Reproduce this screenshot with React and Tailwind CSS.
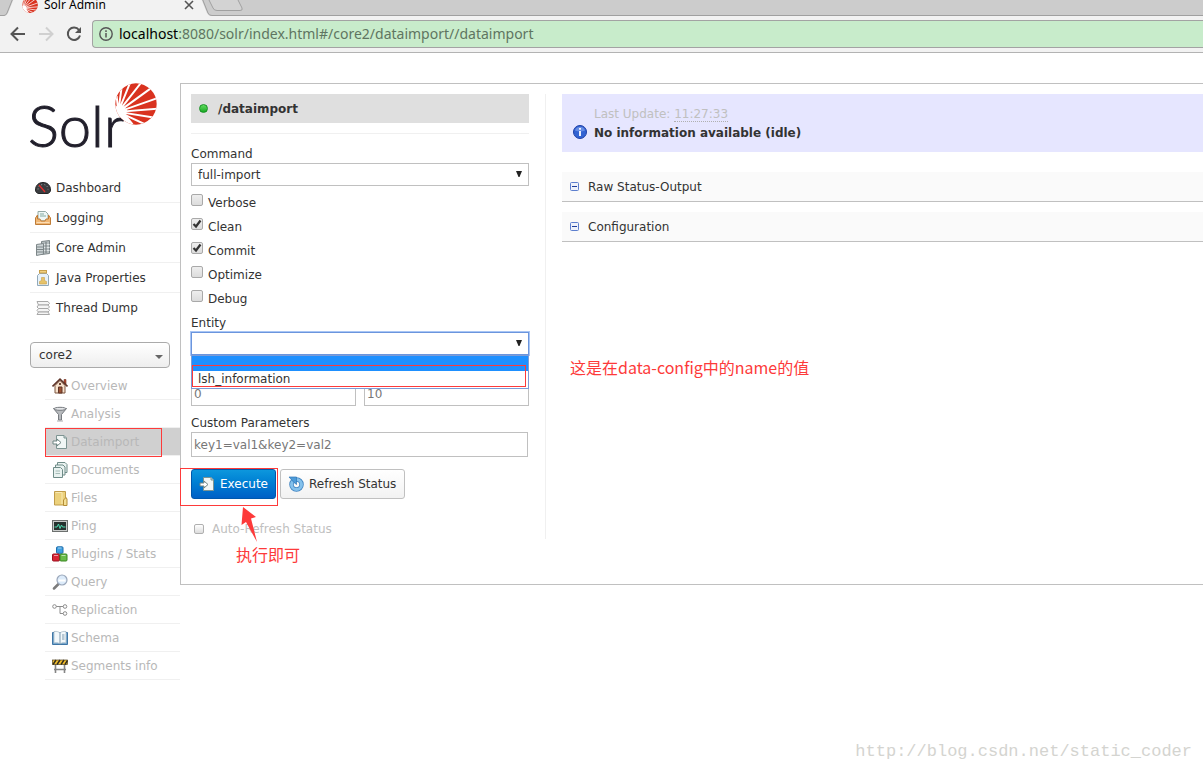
import clsx from "clsx";

function Sunburst({ className }) {
  return (
    <svg viewBox="0 0 128 128" className={className} aria-hidden="true">
      <defs>
        <clipPath id="sun">
          <circle cx="64" cy="64" r="63" />
        </clipPath>
      </defs>
      <g clipPath="url(#sun)">
        <rect width="128" height="128" fill="#d9321f" />
        <path
          d="M10 88L5 40M10 88L20 14M10 88L48 -6M10 88L82 -4M10 88L112 14M10 88L130 46M10 88L134 78M10 88L122 106M10 88L96 128"
          stroke="#fff"
          strokeWidth="6"
        />
        <path d="M-4 66L8 72L18 66L24 73L31 72L32 79L38 83L33 88L38 94L32 97L46 112L56 124L40 134L-10 130Z" fill="#fff" />
      </g>
    </svg>
  );
}

function ImportDoc() {
  return (
    <>
      <path d="M4.500 1.500H12L14.500 4V14.500H4.500Z" fill="#f1f6f5" stroke="#7d9492" />
      <path d="M12 1.500V4H14.500" fill="#c4d4d2" stroke="#7d9492" />
      <path d="M1 7H5V5L9 8.500L5 12V10H1Z" fill="#fff" stroke="#6f8583" />
    </>
  );
}

const icons = {
  dashboard: (
    <>
      <path d="M.5 10C.5 5 4 2.500 8 2.500S15.500 5 15.500 10C15.500 12 14 13.500 12 13.500H4C2 13.500 .5 12 .5 10Z" fill="#3b3d40" stroke="#242527" />
      <path d="M3 9.500C3 6.500 5 4.500 8 4.500S13 6.500 13 9.500" fill="none" stroke="#9a9da0" strokeDasharray="1 2" />
      <path d="M4 5L10 12" stroke="#e22c2c" strokeWidth="1.300" />
    </>
  ),
  logging: (
    <>
      <path d="M3 1.500H10.500L13 4V11H3Z" fill="#eef7f5" stroke="#93aaa6" />
      <path d="M5 4H9M5 6H11" stroke="#83aaa2" />
      <path d="M.5 8L2.500 5V9H5L6 11H10L11 9H13.500V5L15.500 8V14.500H.5Z" fill="#f0b775" stroke="#bf7c37" />
      <path d="M1.500 12.500H14.500" stroke="#fbdcb4" />
    </>
  ),
  core: (
    <>
      <path d="M6.500 1.500L14.500 .5V13.500L6.500 14.500Z" fill="#b4bcbe" stroke="#7d8688" />
      <path d="M6.500 4.500H14.500M6.500 7.500H14.500M6.500 10.500H14.500" stroke="#e3e8e9" />
      <path d="M1.500 4.500L8.500 3.500V14L1.500 15.500Z" fill="#cdd4d6" stroke="#7d8688" />
      <path d="M1.500 7H8.500M1.500 9.500H8.500M1.500 12H8.500" stroke="#7d8688" />
      <path d="M11 2V13" stroke="#6c7577" />
    </>
  ),
  java: (
    <>
      <path d="M2.500 5.500L4.500 3.500H11.500L13.500 5.500V15.500H2.500Z" fill="#e7f2fa" stroke="#91a9ba" />
      <rect x="4.500" y=".5" width="7" height="2.500" fill="#f0d080" stroke="#c9a04a" />
      <path d="M4.500 14V11.500L6.500 10.500V7.500H9.500V10.500L11.500 11.500V14Z" fill="#e6c36a" stroke="#c9a04a" strokeWidth=".6" />
    </>
  ),
  thread: (
    <g fill="#f5f5f5" stroke="#a8a8a8">
      <path d="M2 1.500H13L14.500 3.500L13 5H3.500Z" />
      <path d="M3.500 5H13L14.500 7L13 8.500H3.500L2 7Z" />
      <path d="M3.500 8.500H13L14.500 10.500L13 12H3.500L2 10.500Z" />
      <path d="M3.500 12H13L14.500 14.500H2Z" />
    </g>
  ),
  overview: (
    <>
      <path d="M12 1.500H14V6H12Z" fill="#b34d34" stroke="#703321" strokeWidth=".6" />
      <path d="M3 7.500L8 2.500L13 7.500V15H3Z" fill="#f7e2cd" stroke="#7c5640" />
      <path d="M.5 8.500L8 1.200L15.500 8.500" fill="none" stroke="#5f3529" strokeWidth="1.600" />
      <path d="M6.500 9H10V15H6.500Z" fill="#9c5233" stroke="#5f3529" />
      <path d="M7 5H9V7H7Z" fill="#6e4737" />
    </>
  ),
  analysis: (
    <>
      <path d="M1.500 2.500H14.500L9.500 8.500V14H6.500V8.500Z" fill="#b7babd" stroke="#777b80" />
      <ellipse cx="8" cy="2.800" rx="6" ry="1.500" fill="#e4e6e8" stroke="#777b80" />
      <path d="M5 15H11" stroke="#a8abad" />
    </>
  ),
  import: <ImportDoc />,
  documents: (
    <g fill="#e9f2f0" stroke="#6f8c88">
      <path d="M5.500 .5H13L15 2.500V10.500H5.500Z" />
      <path d="M3.500 3H11L13 5V13H3.500Z" />
      <path d="M1.500 5.500H8.500L10.500 7.500V15.500H1.500Z" />
      <path d="M3.500 9H8M3.500 11.500H8" stroke="#a6bcb8" />
    </g>
  ),
  files: (
    <>
      <path d="M2.500 1.500H13.500V15H2.500Z" fill="#ecd17c" stroke="#c09c4a" />
      <path d="M3.500 2.500H10V14" fill="none" stroke="#f8e9b4" />
      <path d="M11.500 15.500V10L14 7.500L15 9V15.500Z" fill="#f4df94" stroke="#b48d36" />
    </>
  ),
  ping: (
    <>
      <rect x=".5" y="2.500" width="15" height="11" fill="#c9cbca" stroke="#6d706f" />
      <rect x="2" y="4" width="12" height="8" fill="#26322f" />
      <path d="M2.500 9H5L6.500 6L8 10.500L9.500 7L10.500 9H13.500" fill="none" stroke="#4ddbb1" />
    </>
  ),
  plugins: (
    <>
      <rect x="4.500" y=".8" width="6.500" height="6.500" rx="1" fill="#3f9fe0" stroke="#1f6eac" />
      <rect x=".5" y="8" width="7" height="7" rx="1" fill="#d92435" stroke="#9a1321" />
      <rect x="8" y="8" width="7" height="7" rx="1" fill="#68bb48" stroke="#3b8722" />
      <path d="M6 2H9.500M2 9.500H6M9.500 9.500H13.500" stroke="#fff" opacity=".55" />
    </>
  ),
  query: (
    <>
      <path d="M7 9.500L2 14.500" stroke="#7c7c7c" strokeWidth="2.500" strokeLinecap="round" />
      <circle cx="10" cy="6" r="5" fill="#dcebfa" stroke="#9ba8bb" strokeWidth="1.200" />
      <path d="M6.500 6.500H13.500" stroke="#fff" strokeWidth="2" />
    </>
  ),
  replication: (
    <g fill="#fff" stroke="#8d8d8d">
      <path d="M4 4.500H12M8 4.500V11.500H12" fill="none" />
      <circle cx="2.500" cy="4.500" r="1.800" />
      <circle cx="13" cy="4.500" r="1.800" />
      <circle cx="13" cy="11.500" r="1.800" />
    </g>
  ),
  schema: (
    <>
      <path d="M.5 2.500H15.500V14.500H.5Z" fill="#6fa3cd" stroke="#3f76a6" />
      <path d="M2 1.500C5 1 7 2 8 3C9 2 11 1 14 1.500V13C11 12.500 9 13 8 14C7 13 5 12.500 2 13Z" fill="#f2f8fb" stroke="#a0b4c2" strokeWidth=".7" />
      <path d="M8 3V14M10 5H12.500M10 7H12.500M10 9H12.500" stroke="#7c99ae" />
    </>
  ),
  segments: (
    <>
      <path d="M3.500 6V15M12.500 6V15M2 11.500H14" stroke="#858585" strokeWidth="1.600" />
      <rect x=".5" y="2" width="15" height="4.500" fill="#f5bf2a" stroke="#524420" strokeWidth=".7" />
      <path d="M1 6.500L4 2M5 6.500L8 2M9 6.500L12 2M13 6.500L15.500 2.500" stroke="#332d20" strokeWidth="1.500" />
    </>
  ),
};

function Icon({ name }) {
  return (
    <svg viewBox="0 0 16 16" className="h-4 w-4 shrink-0" aria-hidden="true">
      {icons[name]}
    </svg>
  );
}

const mainMenu = [
  ["dashboard", "Dashboard"],
  ["logging", "Logging"],
  ["core", "Core Admin"],
  ["java", "Java Properties"],
  ["thread", "Thread Dump"],
];

const coreMenu = [
  ["overview", "Overview"],
  ["analysis", "Analysis"],
  ["import", "Dataimport"],
  ["documents", "Documents"],
  ["files", "Files"],
  ["ping", "Ping"],
  ["plugins", "Plugins / Stats"],
  ["query", "Query"],
  ["replication", "Replication"],
  ["schema", "Schema"],
  ["segments", "Segments info"],
];

const options = [
  ["Verbose", false],
  ["Clean", true],
  ["Commit", true],
  ["Optimize", false],
  ["Debug", false],
];

function BrowserBar() {
  return (
    <header className="border-b border-[#b3b3b3] bg-[#f2f2f2] font-['Noto_Sans',sans-serif]">
      <div className="relative h-4 overflow-hidden bg-[#cccccc]">
        <svg className="absolute inset-0 h-4 w-full" aria-hidden="true">
          <path d="M0 15.500H4Q6 15.500 7 13L13 -2H202L208 13Q209 15.500 212 15.500H2000" fill="none" stroke="#a0a0a0" />
          <path d="M5 16Q7 15 8 13L14 -2H201L207 13Q208 15 210 16Z" fill="#f2f2f2" />
          <path d="M208 -2L213 8Q214 10.500 217 10.500H240Q243 10.500 242 8L237 -2" fill="#d3d3d3" stroke="#a0a0a0" />
        </svg>
        <div className="relative -mt-1.5 flex w-[194px] items-center gap-1.5 pl-[22px]">
          <Sunburst className="h-4 w-4" />
          <span className="text-xs leading-[22px] text-black">Solr Admin</span>
          <button aria-label="Close tab" className="ml-auto">
            <svg viewBox="0 0 10 10" className="h-2.5 w-2.5">
              <path d="M1 1L9 9M9 1L1 9" stroke="#555" strokeWidth="1.600" />
            </svg>
          </button>
        </div>
      </div>
      <div className="flex items-center gap-3 py-1 pl-2.5">
        <button aria-label="Back">
          <svg viewBox="0 0 16 16" className="h-4 w-4">
            <path d="M15 8H2M8 1.500L1.500 8L8 14.500" fill="none" stroke="#555" strokeWidth="2" />
          </svg>
        </button>
        <button aria-label="Forward">
          <svg viewBox="0 0 16 16" className="h-4 w-4">
            <path d="M1 8H14M8 1.500L14.500 8L8 14.500" fill="none" stroke="#d0d0d0" strokeWidth="2" />
          </svg>
        </button>
        <button aria-label="Reload">
          <svg viewBox="0 0 16 16" className="h-4 w-4">
            <path d="M13 4A6.200 6.200 0 1 0 14 9.500" fill="none" stroke="#555" strokeWidth="2" />
            <path d="M15 1V7H9Z" fill="#555" />
          </svg>
        </button>
        <div className="-ml-0.5 flex h-7 flex-1 items-center gap-1.5 rounded-l-sm border border-r-0 border-[#a3a3a3] bg-[#c8eccb] pl-1.5">
          <svg viewBox="0 0 14 14" className="h-3.5 w-3.5" aria-hidden="true">
            <circle cx="7" cy="7" r="6.200" fill="none" stroke="#555" strokeWidth="1.400" />
            <path d="M7 6V10.500M7 3.300V4.900" stroke="#555" strokeWidth="1.500" />
          </svg>
          <p className="text-sm text-[#5f7561]">
            <span className="text-black">localhost</span>:8080/solr/index.html#/core2/dataimport//dataimport
          </p>
        </div>
      </div>
    </header>
  );
}

function Sidebar() {
  return (
    <aside className="w-[180px] shrink-0 pl-[30px]">
      <a href="#/" className="relative block h-[90px] text-[#211f2b]">
        <span className="-ml-0.5 block font-['Lato',sans-serif] text-[58px] leading-[84px] font-light [-webkit-text-stroke:1px_#211f2b]">
          Solr
        </span>
        <Sunburst className="absolute top-0 left-[85px] h-[42px] w-[42px]" />
      </a>
      <nav>
        {mainMenu.map(([icon, label]) => (
          <a
            key={label}
            href="#/"
            className="flex h-[30px] items-center gap-[5px] border-b border-[#f0f0f0] pl-[5px] last:border-0"
          >
            <Icon name={icon} />
            {label}
          </a>
        ))}
      </nav>
      <div className="relative mt-[19px] mr-2.5">
        <select
          aria-label="Core"
          className="block h-[26px] w-full appearance-none rounded border border-[#aaa] bg-linear-to-b from-white to-[#eee] pl-2"
        >
          <option>core2</option>
        </select>
        <svg viewBox="0 0 8 4" className="absolute top-[13px] right-[7px] h-1 w-2" aria-hidden="true">
          <path d="M0 0H8L4 4Z" fill="#666" />
        </svg>
      </div>
      <nav className="mt-1 ml-[15px] text-[#b8b8b8]">
        {coreMenu.map(([icon, label]) => (
          <a
            key={label}
            href="#/core2"
            className={clsx(
              "relative flex h-7 items-center gap-[3px] border-b border-[#f0f0f0] pl-[7px]",
              label === "Dataimport" && "bg-[#d0d0d0]"
            )}
          >
            <Icon name={icon} />
            {label}
            {label === "Dataimport" && (
              <span className="absolute top-0 left-0 h-[29px] w-[117px] border border-[#fd3a3a]" />
            )}
          </a>
        ))}
      </nav>
    </aside>
  );
}

function Caret() {
  return (
    <svg viewBox="0 0 6 6" className="absolute top-2 right-[7px] h-1.5 w-1.5" aria-hidden="true">
      <path d="M0 0H6L3.500 6H2.500Z" fill="#222" />
    </svg>
  );
}

function FieldLabel({ htmlFor, children }) {
  return (
    <label htmlFor={htmlFor} className="block pt-0.5 leading-[18px]">
      {children}
    </label>
  );
}

function CheckOption({ label, checked }) {
  return (
    <label className="flex h-6 items-center gap-[5px] pt-0.5">
      <span className="relative mb-1.5 h-3 w-3">
        <input
          type="checkbox"
          defaultChecked={checked}
          className="peer block h-3 w-3 appearance-none rounded-xs border border-[#a9a9a9] bg-linear-to-b from-[#eee] to-[#dcdcdc]"
        />
        <svg viewBox="0 0 12 12" className="absolute inset-0 hidden h-3 w-3 peer-checked:block" aria-hidden="true">
          <path d="M2.500 6L5 8.500L9.500 2.500" fill="none" stroke="#333" strokeWidth="2.200" />
        </svg>
      </span>
      {label}
    </label>
  );
}

function ImportForm() {
  return (
    <form className="w-[338px] shrink-0">
      <h1 className="mb-2.5 flex h-[29px] items-center gap-2.5 bg-[#dfdfdf] pl-2 font-bold">
        <span className="h-[9px] w-[9px] rounded-full border border-[#159222] bg-linear-to-b from-[#5fdc5f] to-[#11a921]" />
        /dataimport
      </h1>
      <div className="border-t border-[#f0f0f0] pt-[9px]">
        <FieldLabel htmlFor="command">Command</FieldLabel>
        <div className="relative">
          <select id="command" className="block h-[23px] w-full appearance-none border border-[#c0c0c0] pl-1.5">
            <option>full-import</option>
          </select>
          <Caret />
        </div>
      </div>
      <div className="mt-1 mb-0.5">
        {options.map(([label, checked]) => (
          <CheckOption key={label} label={label} checked={checked} />
        ))}
      </div>
      <FieldLabel htmlFor="entity">Entity</FieldLabel>
      <div className="relative mb-[26px]">
        <select
          id="entity"
          className="block h-[23px] w-full appearance-none border border-[#6b95dd] ring-1 ring-[#a9c6f5]"
        />
        <Caret />
        <ul className="absolute inset-x-0 top-full z-10 border border-[#7d9bd6] bg-white">
          <li className="h-[15px] bg-[#1e90ff]" />
          <li className="h-[17px] pl-1.5 leading-[17px]">lsh_information</li>
        </ul>
        <span className="pointer-events-none absolute top-[33px] right-[3px] left-px z-20 h-[22px] border border-[#fd3a3a]" />
      </div>
      <div className="flex gap-2">
        <input aria-label="Start" placeholder="0" className="h-[25px] w-full min-w-0 border border-[#c0c0c0] px-0.5 placeholder:text-[#777]" />
        <input aria-label="Rows" placeholder="10" className="h-[25px] w-full min-w-0 border border-[#c0c0c0] px-0.5 placeholder:text-[#777]" />
      </div>
      <div className="mt-1.5">
        <FieldLabel htmlFor="custom">Custom Parameters</FieldLabel>
        <input
          id="custom"
          placeholder="key1=val1&key2=val2"
          className="block h-[25px] w-[337px] border border-[#c0c0c0] px-0.5 placeholder:text-[#777]"
        />
      </div>
      <div className="relative mt-3 flex gap-1">
        <button
          type="button"
          className="flex h-[30px] items-center gap-[5px] rounded-[3px] border border-[#0058ad] bg-linear-to-b from-[#0d97dd] to-[#0060c6] px-[7px] text-white"
        >
          <Icon name="import" />
          Execute
        </button>
        <button
          type="button"
          className="flex h-[30px] items-center gap-[5px] rounded-[3px] border border-[#c0c0c0] bg-linear-to-b from-white to-[#f2f2f2] pr-2 pl-[7px]"
        >
          <svg viewBox="0 0 16 16" className="h-4 w-4" aria-hidden="true">
            <circle cx="8.500" cy="8.500" r="5" fill="none" stroke="#3d82c0" strokeWidth="4.500" />
            <circle cx="8.500" cy="8.500" r="5" fill="none" stroke="#84c1ec" strokeWidth="3" />
            <path d="M1 1H8.500V8.500L6 6.500Z" fill="#4d9bd8" stroke="#2e76b8" strokeWidth=".7" />
          </svg>
          Refresh Status
        </button>
        <span className="pointer-events-none absolute -top-px -left-[11px] h-[38px] w-[98px] border border-[#fd3a3a]" />
        <svg viewBox="0 0 17 36" className="absolute top-[38px] left-[50px] z-10 h-9 w-[17px]" aria-hidden="true">
          <path d="M2 0L15 10L10 11.500L16 35L5 15L.5 18Z" fill="#fd3a3a" />
        </svg>
        <span className="absolute top-[73px] left-[45px] text-base leading-6 whitespace-nowrap text-[#fd3a3a] font-['Noto_Sans_CJK_SC',sans-serif]">
          执行即可
        </span>
      </div>
      <label className="mt-5 flex items-center gap-2 pl-[3px] text-[#c0c0c0]">
        <input
          type="checkbox"
          className="h-2.5 w-2.5 appearance-none rounded-xs border border-[#b0b0b0] bg-linear-to-b from-white to-[#ddd]"
        />
        Auto-Refresh Status
      </label>
    </form>
  );
}

function Section({ title }) {
  return (
    <button className="mb-2.5 flex h-[30px] w-full items-center gap-[9px] border-b border-[#c0c0c0] bg-[#fafafa] pl-2 text-left">
      <svg viewBox="0 0 9 9" className="h-[9px] w-[9px]" aria-hidden="true">
        <rect x=".5" y=".5" width="8" height="8" rx="1" fill="#eef2fb" stroke="#5d7fce" />
        <path d="M2 4.500H7" stroke="#1f3f9c" />
      </svg>
      {title}
    </button>
  );
}

function StatusPanel() {
  return (
    <section className="min-w-0 flex-1">
      <div className="mb-5 flex h-[58px] items-end gap-[7px] bg-[#e6e6ff] pb-[9px] pl-[11px]">
        <svg viewBox="0 0 14 14" className="mb-1 h-3.5 w-3.5" aria-hidden="true">
          <circle cx="7" cy="7" r="6.500" fill="#3262d2" stroke="#1d3fa5" />
          <path d="M2 5.500A5.200 5.200 0 0 1 12 5.500Q7 7.500 2 5.500" fill="#7e9feb" opacity=".7" />
          <path d="M7 6V11M7 3V4.800" stroke="#fff" strokeWidth="1.800" />
        </svg>
        <div className="leading-[19px]">
          <p className="text-[#c0c0c0]">
            Last Update: <abbr title="11:27:33" className="border-b border-dotted border-[#b0b0b0] no-underline">11:27:33</abbr>
          </p>
          <p className="font-bold">No information available (idle)</p>
        </div>
      </div>
      <Section title="Raw Status-Output" />
      <Section title="Configuration" />
      <p className="mt-[113px] ml-2 text-base leading-6 text-[#fd3a3a] font-['Noto_Sans_CJK_SC',sans-serif]">
        这是在data-config中的name的值
      </p>
    </section>
  );
}

export default function App() {
  return (
    <div className="relative min-h-screen bg-white font-['DejaVu_Sans',sans-serif] text-xs leading-5 text-[#333]">
      <BrowserBar />
      <main className="flex items-start pt-[30px]">
        <Sidebar />
        <div className="flex min-w-0 flex-1 gap-4 border border-r-0 border-[#c0c0c0] pt-2.5 pb-[45px] pl-2.5">
          <ImportForm />
          <div className="w-px bg-[#f0f0f0]" />
          <StatusPanel />
        </div>
      </main>
      <p className="absolute right-[11px] bottom-[7px] text-[17px] leading-6 text-[#d4d4d0] font-['Liberation_Mono',monospace]">
        http://blog.csdn.net/static_coder
      </p>
    </div>
  );
}
